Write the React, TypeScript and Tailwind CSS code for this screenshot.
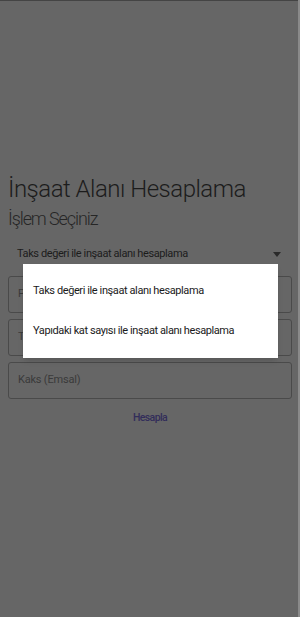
import React from "react";

export default function App() {
  return (
    <div
      className="relative h-[617px] w-[300px] overflow-hidden bg-[#666666]"
      style={{ fontFamily: "Roboto, 'Noto Sans', sans-serif" }}
    >
      <div className="absolute inset-x-0 top-0 h-px bg-[#444444]" />
      <div className="absolute inset-y-0 right-0 w-[2px] bg-[#8a8a8a]" />
      <div className="flex flex-col px-2 pt-[174px]">
        <h1 className="text-[24px] font-light leading-[30px] tracking-[-0.5px] text-[#1c1c1c]">İnşaat Alanı Hesaplama</h1>
        <p className="mt-[3px] text-[18px] font-light leading-[24px] tracking-[-1.1px] text-[#262626]">İşlem Seçiniz</p>
        <div className="mt-[11px] flex h-[24px] items-center justify-between pl-[9px] pr-[11px]">
          <span className="text-[11px] tracking-[-0.4px] text-[#1c1c1c]">Taks değeri ile inşaat alanı hesaplama</span>
          <svg width="8" height="5" viewBox="0 0 8 5"><path d="M0 0h8L4 5z" fill="#2a2a2a" /></svg>
        </div>
        <div className="mt-[10px] flex flex-col gap-[6px]">
          <div className="flex h-[37px] items-center rounded-[3px] border border-[#4a4a4a] px-[9px] text-[11px] tracking-[-0.2px] text-[#3a3a3a]">Parsel Alanı</div>
          <div className="flex h-[37px] items-center rounded-[3px] border border-[#4a4a4a] px-[9px] text-[11px] tracking-[-0.2px] text-[#3a3a3a]">Taks</div>
          <div className="flex h-[37px] items-center rounded-[3px] border border-[#4a4a4a] px-[9px] text-[11px] tracking-[-0.2px] text-[#3a3a3a]">Kaks (Emsal)</div>
        </div>
        <div className="mt-[12px] flex justify-center">
          <span className="text-[10.5px] font-medium leading-[14px] tracking-[-0.6px] text-[#322d5a]">Hesapla</span>
        </div>
      </div>
      <div className="absolute left-[23px] top-[264px] flex h-[94px] w-[255px] flex-col justify-center gap-[22px] bg-white pl-[10px] shadow-md">
        <span className="text-[11px] leading-[18px] tracking-[-0.4px] text-[#1a1a1a]">Taks değeri ile inşaat alanı hesaplama</span>
        <span className="text-[11px] leading-[18px] tracking-[-0.4px] text-[#1a1a1a]">Yapıdaki kat sayısı ile inşaat alanı hesaplama</span>
      </div>
    </div>
  );
}
